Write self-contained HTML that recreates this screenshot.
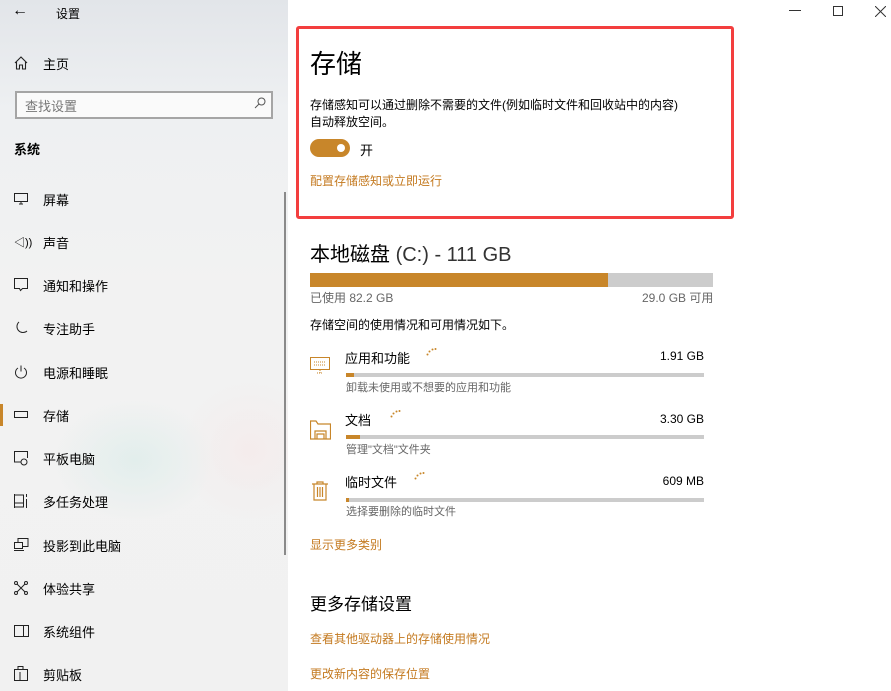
<!DOCTYPE html>
<html><head><meta charset="utf-8"><style>
*{margin:0;padding:0;box-sizing:border-box}
body{width:891px;height:691px;overflow:hidden;background:#fff;font-family:"Liberation Sans","Noto Sans CJK SC",sans-serif;color:#000;position:relative}
.side{position:absolute;left:0;top:0;width:288px;height:691px;background:radial-gradient(ellipse 80px 60px at 135px 460px,#e2eeec,rgba(0,0,0,0)),radial-gradient(ellipse 70px 70px at 250px 450px,#f4ecec,rgba(0,0,0,0)),linear-gradient(#e2e5e9 0,#eef0f2 110px,#f2f2f2 300px,#f1f1f1);}
.a{position:absolute;white-space:nowrap}
.nav{position:absolute;left:43px;font-size:13px}
.ic{position:absolute;left:14px}
.s{font-size:12px}
.g{color:#666}
.o{color:#c47a20}
.r{position:absolute;right:187px;font-size:12px;white-space:nowrap}
</style></head><body>
<div class="side">
<div class="a" style="left:12px;top:2px;font-size:16px">←</div>
<div class="a" style="left:56px;top:5px;font-size:12px">设置</div>
<svg class="ic" style="top:56px" width="14" height="14" viewBox="0 0 14 14" fill="none" stroke="#222" stroke-width="1.1"><path d="M1 7L7 1l6 6M2.5 6v7h3V9h3v4h3V6"/></svg>
<div class="nav" style="top:54px">主页</div>
<div class="a" style="left:15px;top:91px;width:258px;height:28px;border:2px solid #a5a5a5;background:#fafafa"></div>
<div class="a g" style="left:25px;top:96px;font-size:13px;color:#777">查找设置</div>
<svg class="a" style="left:254px;top:97px" width="12" height="12" viewBox="0 0 12 12" fill="none" stroke="#555"><circle cx="7.5" cy="4.5" r="3.5"/><path d="M5 7L1 11"/></svg>
<div class="a" style="left:14px;top:139px;font-size:13px;font-weight:bold">系统</div>
<div class="a" style="left:284px;top:192px;width:2px;height:363px;background:#8a8a8a"></div>
<div class="a" style="left:0;top:404px;width:3px;height:22px;background:#c8862a"></div>
<svg class="ic" style="top:193px" width="14" height="12" fill="none" stroke="#222"><rect x="0.5" y="0.5" width="13" height="8"/><path d="M5 11h4M7 9v2"/></svg>
<div class="nav" style="top:190px">屏幕</div>
<div class="ic" style="top:234px;font-size:11px">◁))</div>
<div class="nav" style="top:233px">声音</div>
<svg class="ic" style="top:278px" width="14" height="14" fill="none" stroke="#222"><path d="M0.5 0.5h13v10h-5l-2 2-1-2h-5z"/></svg>
<div class="nav" style="top:276px">通知和操作</div>
<svg class="ic" style="top:321px" width="14" height="14" fill="none" stroke="#222"><path d="M5 1a6 6 0 1 0 8 9A6 6 0 0 1 5 1z"/></svg>
<div class="nav" style="top:319px">专注助手</div>
<svg class="ic" style="top:365px" width="14" height="14" fill="none" stroke="#222"><path d="M4 3a5.5 5.5 0 1 0 6 0M7 0.5v6"/></svg>
<div class="nav" style="top:363px">电源和睡眠</div>
<svg class="ic" style="top:411px" width="14" height="8" fill="none" stroke="#222"><rect x="0.5" y="0.5" width="13" height="6"/></svg>
<div class="nav" style="top:406px">存储</div>
<svg class="ic" style="top:451px" width="15" height="15" fill="none" stroke="#222"><path d="M7 11H0.5V0.5h13V7"/><circle cx="10" cy="11" r="3"/></svg>
<div class="nav" style="top:449px">平板电脑</div>
<svg class="ic" style="top:494px" width="15" height="14" fill="none" stroke="#222"><path d="M0.5 0v14M0.5 1h9v12h-9M0.5 9h9M12.5 0v3M12.5 5v9"/></svg>
<div class="nav" style="top:492px">多任务处理</div>
<svg class="ic" style="top:538px" width="15" height="13" fill="none" stroke="#222"><path d="M4 4V0.5h10v8H9M0.5 4.5h8v6h-8zM0 12.5h10"/></svg>
<div class="nav" style="top:536px">投影到此电脑</div>
<svg class="ic" style="top:581px" width="14" height="14" fill="none" stroke="#222"><path d="M3 3l8 8M11 3l-8 8"/><circle cx="2" cy="2" r="1.5"/><circle cx="12" cy="2" r="1.5"/><circle cx="2" cy="12" r="1.5"/><circle cx="12" cy="12" r="1.5"/></svg>
<div class="nav" style="top:579px">体验共享</div>
<svg class="ic" style="top:625px" width="15" height="12" fill="none" stroke="#222"><rect x="0.5" y="0.5" width="14" height="11"/><path d="M9.5 0.5v11"/></svg>
<div class="nav" style="top:622px">系统组件</div>
<svg class="ic" style="top:666px" width="14" height="15" fill="none" stroke="#222"><path d="M0.5 3.5h13v11h-13zM4 3.5V0.5h5v3M6 6v8"/></svg>
<div class="nav" style="top:665px">剪贴板</div>
</div>
<div class="a" style="left:789px;top:10px;width:12px;height:1px;background:#333"></div>
<div class="a" style="left:833px;top:6px;width:10px;height:10px;border:1px solid #333"></div>
<svg class="a" style="left:875px;top:6px" width="11" height="11" stroke="#333"><path d="M0 0l11 11M11 0L0 11"/></svg>

<div class="a" style="left:296px;top:26px;width:438px;height:193px;border:3px solid #f33e3e;border-radius:3px"></div>
<div class="a" style="left:310px;top:44px;font-size:26px">存储</div>
<div class="a s" style="left:310px;top:97px;line-height:17px">存储感知可以通过删除不需要的文件(例如临时文件和回收站中的内容)<br>自动释放空间。</div>
<div class="a" style="left:310px;top:139px;width:40px;height:18px;border-radius:9px;background:#c8862a"></div>
<div class="a" style="left:337px;top:144px;width:8px;height:8px;border-radius:50%;background:#fff"></div>
<div class="a" style="left:360px;top:140px;font-size:13px">开</div>
<div class="a s o" style="left:310px;top:172px">配置存储感知或立即运行</div>

<div class="a" style="left:310px;top:238px;font-size:20px">本地磁盘 <span style="color:#333">(C:) - 111 GB</span></div>
<div class="a" style="left:310px;top:273px;width:403px;height:14px;background:#ccc"><div style="width:298px;height:14px;background:#c8862a"></div></div>
<div class="a s g" style="left:310px;top:289px">已使用 82.2 GB</div>
<div class="a s g" style="left:642px;top:289px">29.0 GB 可用</div>
<div class="a s" style="left:310px;top:316px">存储空间的使用情况和可用情况如下。</div>

<svg class="a" style="left:310px;top:357px" width="20" height="17" fill="none" stroke="#c8862a"><rect x="0.5" y="0.5" width="19" height="12"/><path d="M7 16h6M10 13v3M4 5h12M4 8h12" stroke-dasharray="1 1"/></svg>
<div class="a" style="left:345px;top:348px;font-size:13px">应用和功能</div>
<div class="r" style="top:349px">1.91 GB</div>
<div class="a" style="left:346px;top:373px;width:358px;height:4px;background:#ccc"><div style="width:8px;height:4px;background:#c8862a"></div></div>
<div class="a s g" style="left:346px;top:379px;font-size:11px">卸载未使用或不想要的应用和功能</div>

<svg class="a" style="left:310px;top:420px" width="21" height="20" fill="none" stroke="#c8862a" stroke-width="1.2"><path d="M0.5 2V19h20V4H8L6 1H0.5zM5 19v-8h11v8M7 19v-5h7v5"/></svg>
<div class="a" style="left:345px;top:410px;font-size:13px">文档</div>
<div class="r" style="top:412px">3.30 GB</div>
<div class="a" style="left:346px;top:435px;width:358px;height:4px;background:#ccc"><div style="width:14px;height:4px;background:#c8862a"></div></div>
<div class="a s g" style="left:346px;top:441px;font-size:11px">管理"文档"文件夹</div>

<svg class="a" style="left:312px;top:481px" width="16" height="20" fill="none" stroke="#c8862a" stroke-width="1.2"><path d="M0 3h16M5 3V1h6v2M2 3v16h12V3M5.5 6v10M8 6v10M10.5 6v10"/></svg>
<div class="a" style="left:345px;top:472px;font-size:13px">临时文件</div>
<div class="r" style="top:474px">609 MB</div>
<div class="a" style="left:346px;top:498px;width:358px;height:4px;background:#ccc"><div style="width:3px;height:4px;background:#c8862a"></div></div>
<div class="a s g" style="left:346px;top:503px;font-size:11px">选择要删除的临时文件</div>

<svg class="a" style="left:426px;top:348px" width="12" height="8" fill="#c8862a"><circle cx="1.5" cy="6.5" r="1"/><circle cx="3.5" cy="3.5" r="1"/><circle cx="6.5" cy="1.5" r="1"/><circle cx="9.5" cy="1" r="1"/></svg>
<svg class="a" style="left:390px;top:410px" width="12" height="8" fill="#c8862a"><circle cx="1.5" cy="6.5" r="1"/><circle cx="3.5" cy="3.5" r="1"/><circle cx="6.5" cy="1.5" r="1"/><circle cx="9.5" cy="1" r="1"/></svg>
<svg class="a" style="left:414px;top:472px" width="12" height="8" fill="#c8862a"><circle cx="1.5" cy="6.5" r="1"/><circle cx="3.5" cy="3.5" r="1"/><circle cx="6.5" cy="1.5" r="1"/><circle cx="9.5" cy="1" r="1"/></svg>

<div class="a s o" style="left:310px;top:536px">显示更多类别</div>
<div class="a" style="left:310px;top:590px;font-size:17px">更多存储设置</div>
<div class="a s o" style="left:310px;top:630px">查看其他驱动器上的存储使用情况</div>
<div class="a s o" style="left:310px;top:665px">更改新内容的保存位置</div>
</body></html>
